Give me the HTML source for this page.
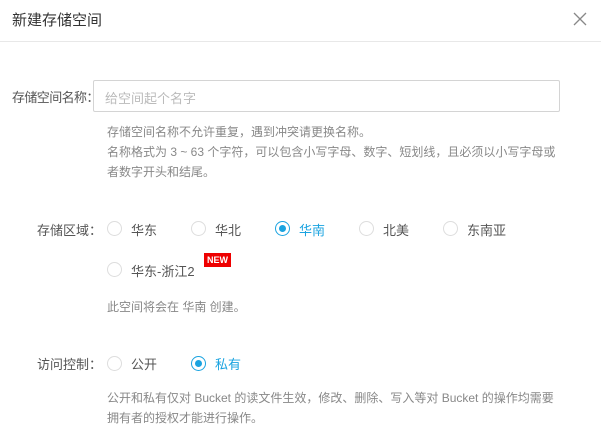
<!DOCTYPE html>
<html><head><meta charset="utf-8"><style>
*{margin:0;padding:0;box-sizing:border-box}
body{width:601px;height:442px;background:#fff;font-family:"Liberation Sans","Noto Sans CJK SC",sans-serif;position:relative;overflow:hidden;color:#555}
.a{position:absolute;white-space:nowrap}
.t{font-size:15px;color:#333;left:12px;top:9px}
.hr{left:0;right:0;top:41px;height:1px;background:#e8e8e8}
.lbl{font-size:13px;color:#555}
.inp{left:93px;top:80px;width:467px;height:32px;border:1px solid #d4d4d4;border-radius:2px;font-size:13px;color:#bbb;padding:7px 11px}
.h{font-size:12px;color:#888;line-height:20px;left:107px}
.r{width:15px;height:15px;border:1px solid #ddd;border-radius:50%}
.r.on{border-color:#1aa3e0}
.r.on::after{content:"";position:absolute;left:3px;top:3px;width:7px;height:7px;border-radius:50%;background:#1aa3e0}
.o{font-size:13px;color:#555}
.b{color:#1aa3e0}
.new{left:204px;top:253px;width:27px;height:14px;background:#e00;color:#fff;font-size:9px;font-weight:bold;text-align:center;line-height:14px}
</style></head><body>
<div class="a t">新建存储空间</div>
<svg class="a" style="left:573px;top:12px" width="14" height="14" viewBox="0 0 14 14"><path d="M1 1L13 13M13 1L1 13" stroke="#888" stroke-width="1.3" fill="none"/></svg>
<div class="a hr"></div>
<div class="a lbl" style="left:12px;top:87px;letter-spacing:-0.6px">存储空间名称：</div>
<div class="a inp">给空间起个名字</div>
<div class="a h" style="top:122px">存储空间名称不允许重复，遇到冲突请更换名称。<br>名称格式为 3 ~ 63 个字符，可以包含小写字母、数字、短划线，且必须以小写字母或<br>者数字开头和结尾。</div>

<div class="a lbl" style="left:37px;top:220px">存储区域：</div>
<div class="a r" style="left:107px;top:221px"></div><div class="a o" style="left:131px;top:220px">华东</div>
<div class="a r" style="left:191px;top:221px"></div><div class="a o" style="left:215px;top:220px">华北</div>
<div class="a r on" style="left:275px;top:221px"></div><div class="a o b" style="left:299px;top:220px">华南</div>
<div class="a r" style="left:359px;top:221px"></div><div class="a o" style="left:383px;top:220px">北美</div>
<div class="a r" style="left:443px;top:221px"></div><div class="a o" style="left:467px;top:220px">东南亚</div>
<div class="a r" style="left:107px;top:262px"></div><div class="a o" style="left:131px;top:261px">华东-浙江2</div>
<div class="a new">NEW</div>
<div class="a h" style="top:297px">此空间将会在 华南 创建。</div>

<div class="a lbl" style="left:37px;top:354px">访问控制：</div>
<div class="a r" style="left:107px;top:356px"></div><div class="a o" style="left:131px;top:354px">公开</div>
<div class="a r on" style="left:191px;top:356px"></div><div class="a o b" style="left:215px;top:354px">私有</div>
<div class="a h" style="top:388px">公开和私有仅对 Bucket 的读文件生效，修改、删除、写入等对 Bucket 的操作均需要<br>拥有者的授权才能进行操作。</div>
</body></html>
